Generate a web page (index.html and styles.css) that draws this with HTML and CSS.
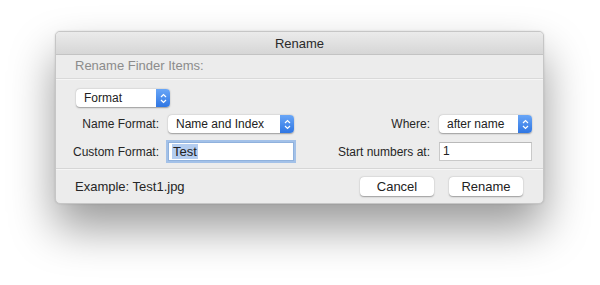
FILE: index.html
```html
<!DOCTYPE html>
<html>
<head>
<meta charset="utf-8">
<link rel="stylesheet" href="styles.css">
</head>
<body>
<div class="window">
  <div class="titlebar">Rename</div>
  <div class="header">Rename Finder Items:</div>
  <div class="content">
    <div class="popup format-popup"><span class="popup-text">Format</span><span class="arrows"><svg width="7" height="11" viewBox="0 0 7 11"><path d="M1 4 L3.5 1.5 L6 4 M1 7 L3.5 9.5 L6 7" fill="none" stroke="#fff" stroke-width="1.2"/></svg></span></div>
    <div class="grid">
      <div class="label">Name Format:</div>
      <div class="popup"><span class="popup-text">Name and Index</span><span class="arrows"><svg width="7" height="11" viewBox="0 0 7 11"><path d="M1 4 L3.5 1.5 L6 4 M1 7 L3.5 9.5 L6 7" fill="none" stroke="#fff" stroke-width="1.2"/></svg></span></div>
      <div class="label">Where:</div>
      <div class="popup"><span class="popup-text">after name</span><span class="arrows"><svg width="7" height="11" viewBox="0 0 7 11"><path d="M1 4 L3.5 1.5 L6 4 M1 7 L3.5 9.5 L6 7" fill="none" stroke="#fff" stroke-width="1.2"/></svg></span></div>
      <div class="label">Custom Format:</div>
      <div class="field focused"><span class="sel">Test</span></div>
      <div class="label">Start numbers at:</div>
      <div class="field">1</div>
    </div>
  </div>
  <div class="footer">
    <div class="example">Example: Test1.jpg</div>
    <div class="buttons">
      <div class="button">Cancel</div>
      <div class="button">Rename</div>
    </div>
  </div>
</div>
</body>
</html>
```
FILE: styles.css
```css
html, body {
  margin: 0;
  padding: 0;
  background: #fff;
}
body {
  width: 600px;
  height: 285px;
  overflow: hidden;
  font-family: "Liberation Sans", Arial, sans-serif;
  font-size: 12px;
  color: #262626;
}
.window {
  margin: 31px 0 0 55px;
  width: 487px;
  background: #ececec;
  border: 1px solid #c6c6c6;
  border-radius: 5px;
  box-shadow: 0 24px 45px rgba(0,0,0,0.4), 0 0 2px rgba(0,0,0,0.15);
  overflow: hidden;
}
.titlebar {
  height: 22px;
  line-height: 23px;
  text-align: center;
  font-size: 13px;
  color: #2a2a2a;
  background: linear-gradient(#ebebeb, #d6d6d6);
  border-bottom: 1px solid #c3c3c3;
}
.header {
  height: 23px;
  line-height: 22px;
  padding-left: 19px;
  font-size: 13px;
  color: #8b8b8b;
  border-bottom: 1px solid #d9d9d9;
  box-shadow: 0 1px 0 #f6f6f6;
}
.content {
  padding: 10px 11px 7px 0;
  border-bottom: 1px solid #d6d6d6;
}
.popup {
  display: flex;
  align-items: stretch;
  height: 18px;
  background: #fff;
  border-radius: 4px;
  box-shadow: 0 0.5px 1.5px rgba(0,0,0,0.35);
  overflow: hidden;
}
.popup-text {
  flex: 1;
  line-height: 18px;
  padding-left: 8px;
  font-size: 12px;
  color: #222;
  white-space: nowrap;
}
.arrows {
  width: 14px;
  display: flex;
  align-items: center;
  justify-content: center;
  background: linear-gradient(#69a6f7, #2f76e3);
}
.format-popup {
  width: 94px;
  margin-left: 20px;
}
.grid {
  display: grid;
  grid-template-columns: 103px 126px 1fr 93px;
  column-gap: 9px;
  row-gap: 9px;
  margin-top: 8px;
  align-items: center;
}
.label {
  text-align: right;
  font-size: 12px;
  color: #262626;
  white-space: nowrap;
}
.field {
  height: 17px;
  line-height: 17px;
  background: #fff;
  border: 1px solid #c9c9c9;
  border-top-color: #b9b9b9;
  padding-left: 3px;
  font-size: 12px;
  color: #222;
}
.field.focused {
  border-color: #8fb1dd;
  box-shadow: 0 0 0 2px #a3c1e8;
}
.sel {
  background: #b4cdf0;
  padding: 0 1px;
  font-size: 13px;
}
.footer {
  display: flex;
  align-items: center;
  justify-content: space-between;
  padding: 7px 20px 7px 19px;
  height: 19px;
  border-top: 1px solid #f6f6f6;
}
.example {
  font-size: 13px;
  color: #262626;
}
.buttons {
  display: flex;
  gap: 15px;
}
.button {
  width: 74px;
  height: 19px;
  line-height: 19px;
  text-align: center;
  background: #fff;
  border-radius: 4px;
  box-shadow: 0 0.5px 1.5px rgba(0,0,0,0.35);
  font-size: 13px;
  color: #222;
}
```
